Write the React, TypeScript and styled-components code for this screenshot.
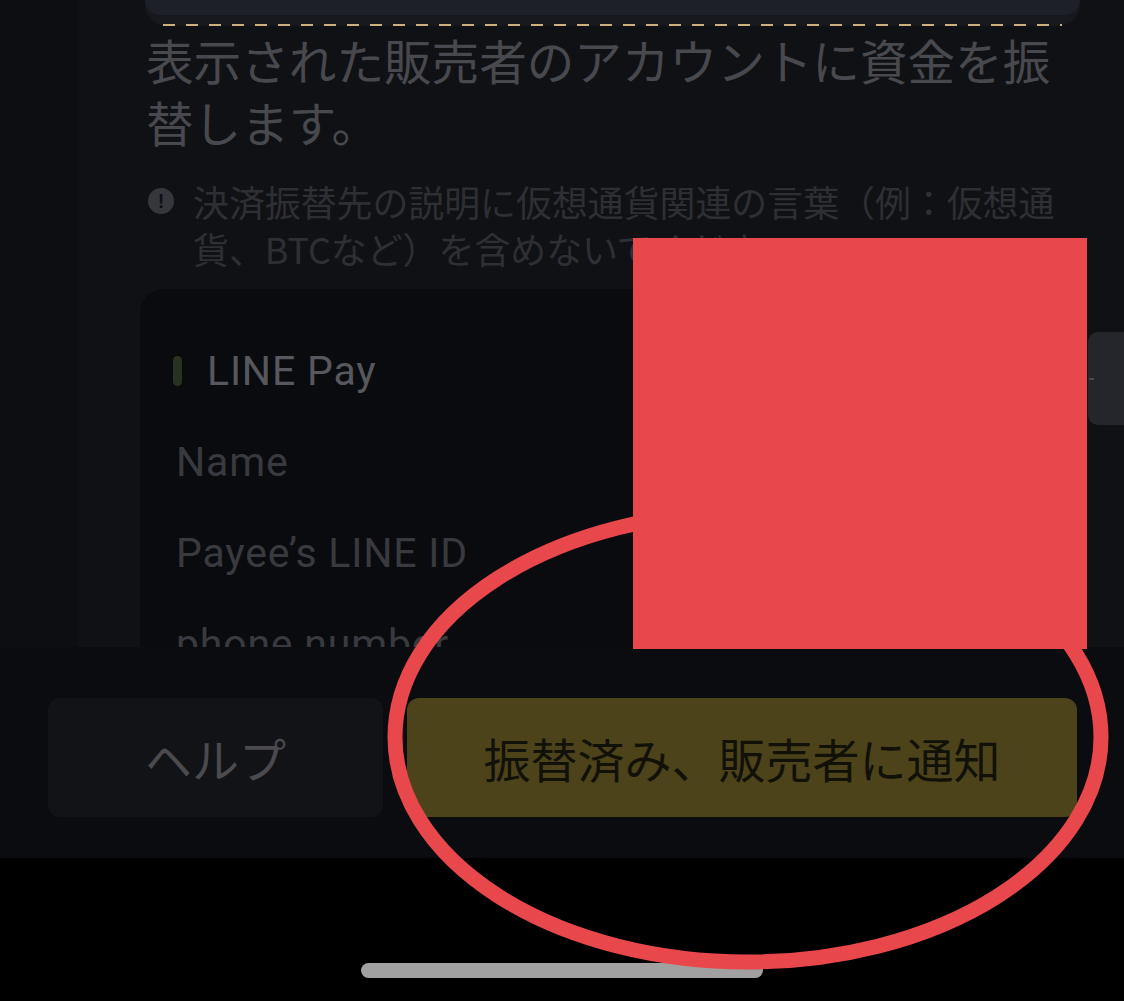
import React from "react";
import styled, { createGlobalStyle } from "styled-components";

const GlobalStyle = createGlobalStyle`
  html, body {
    margin: 0;
    padding: 0;
    background: #000;
  }
  body {
    font-family: "Noto Sans CJK JP", "Noto Sans", sans-serif;
  }
  * { box-sizing: border-box; }
`;

const Screen = styled.div`
  position: relative;
  width: 1124px;
  height: 1001px;
  overflow: hidden;
  display: flex;
  flex-direction: column;
  background: #000;
`;

const ScrollArea = styled.div`
  height: 647px;
  overflow: hidden;
  background: linear-gradient(90deg, #0d0e11 0, #0d0e11 78px, #101115 78px, #101115 100%);
  padding: 0 44px 0 140px;
`;

const TopCard = styled.div`
  position: relative;
  margin-left: 5px;
  height: 26px;
  border-radius: 0 0 22px 22px;
  background: #16181e;
  display: flex;
  flex-direction: column;

  &::after {
    content: "";
    position: absolute;
    left: 18px;
    right: 18px;
    bottom: 0;
    height: 2px;
    background: repeating-linear-gradient(90deg, #cdb07f 0 12px, transparent 12px 23px);
  }
`;

const TopCardFill = styled.div`
  height: 15px;
  border-radius: 0 0 16px 16px;
  background: #1d2028;
`;

const Heading = styled.p`
  margin: 3px 0 0;
  padding: 0 18px 0 6px;
  font-size: 47.6px;
  line-height: 62px;
  color: #48494e;
  font-weight: 400;
`;

const Warning = styled.div`
  margin-top: 25px;
  padding: 0 18px 0 8px;
  display: flex;
  align-items: flex-start;
  gap: 19px;
`;

const WarnIcon = styled.span`
  flex: none;
  width: 26px;
  height: 26px;
  margin-top: 10px;
  border-radius: 50%;
  background: #36373c;
  display: flex;
  align-items: center;
  justify-content: center;
  color: #101115;
  font-family: "Liberation Sans", sans-serif;
  font-weight: 700;
  font-size: 20px;
  line-height: 1;
`;

const WarnText = styled.p`
  margin: 0;
  font-size: 35.9px;
  line-height: 47px;
  color: #2e2f34;
`;

const PayCard = styled.div`
  margin-top: 17px;
  height: 400px;
  border-radius: 24px;
  background: #0a0b0f;
  padding: 37px 0 0 36px;
  display: flex;
  flex-direction: column;
`;

const Row = styled.div<{ $strong?: boolean }>`
  height: 91px;
  display: flex;
  align-items: center;
  gap: 25px;
  font-family: Roboto, "Noto Sans", sans-serif;
  font-size: 41px;
  letter-spacing: 0.8px;
  color: ${(p) => (p.$strong ? "#57585d" : "#393a3f")};
`;

const MethodMark = styled.span`
  width: 9px;
  height: 30px;
  margin-left: -3px;
  border-radius: 5px;
  background: #28331f;
`;

const BottomBar = styled.div`
  height: 211px;
  background: #0b0c10;
  padding: 51px 47px 41px 48px;
  display: grid;
  grid-template-columns: 335px 1fr;
  gap: 24px;
`;

const ActionButton = styled.button<{ $primary?: boolean }>`
  border: none;
  border-radius: 12px;
  height: 119px;
  margin: 0;
  padding: 0;
  display: flex;
  align-items: center;
  justify-content: center;
  font-family: "Noto Sans CJK JP", sans-serif;
  font-size: 47px;
  font-weight: 400;
  background: ${(p) => (p.$primary ? "#4c431b" : "#121317")};
  color: ${(p) => (p.$primary ? "#121108" : "#4a4a4f")};
`;

const HomeArea = styled.div`
  flex: 1;
  background: #000;
  display: flex;
  justify-content: center;
  padding: 105px 0 0 0;
`;

const HomeIndicator = styled.div`
  width: 402px;
  height: 15px;
  border-radius: 8px;
  background: #a1a1a1;
`;

const SideTab = styled.div`
  position: absolute;
  left: 1088px;
  top: 332px;
  width: 44px;
  height: 93px;
  border-radius: 10px 0 0 10px;
  background: #24262c;
  display: flex;
  align-items: center;

  &::before {
    content: "";
    width: 5px;
    height: 2px;
    margin-left: 1px;
    background: #4a4c52;
  }
`;

const RedBlock = styled.div`
  position: absolute;
  left: 633px;
  top: 238px;
  width: 454px;
  height: 411px;
  background: #e8474b;
`;

const Annotation = styled.svg`
  position: absolute;
  left: 0;
  top: 0;
  pointer-events: none;
`;

export default function App() {
  return (
    <>
      <GlobalStyle />
      <Screen>
        <ScrollArea>
          <TopCard>
            <TopCardFill />
          </TopCard>
          <Heading>表示された販売者のアカウントに資金を振替します。</Heading>
          <Warning>
            <WarnIcon>!</WarnIcon>
            <WarnText>
              決済振替先の説明に仮想通貨関連の言葉（例：仮想通貨、BTCなど）を含めないでください。
            </WarnText>
          </Warning>
          <PayCard>
            <Row $strong>
              <MethodMark />
              LINE Pay
            </Row>
            <Row>Name</Row>
            <Row>Payee’s LINE ID</Row>
            <Row>phone number</Row>
          </PayCard>
        </ScrollArea>
        <BottomBar>
          <ActionButton>ヘルプ</ActionButton>
          <ActionButton $primary>振替済み、販売者に通知</ActionButton>
        </BottomBar>
        <HomeArea>
          <HomeIndicator />
        </HomeArea>
        <SideTab />
        <RedBlock />
        <Annotation width="1124" height="1001" viewBox="0 0 1124 1001">
          <ellipse
            cx="748"
            cy="737"
            rx="353"
            ry="225"
            fill="none"
            stroke="#e8474b"
            strokeWidth="15"
          />
        </Annotation>
      </Screen>
    </>
  );
}
